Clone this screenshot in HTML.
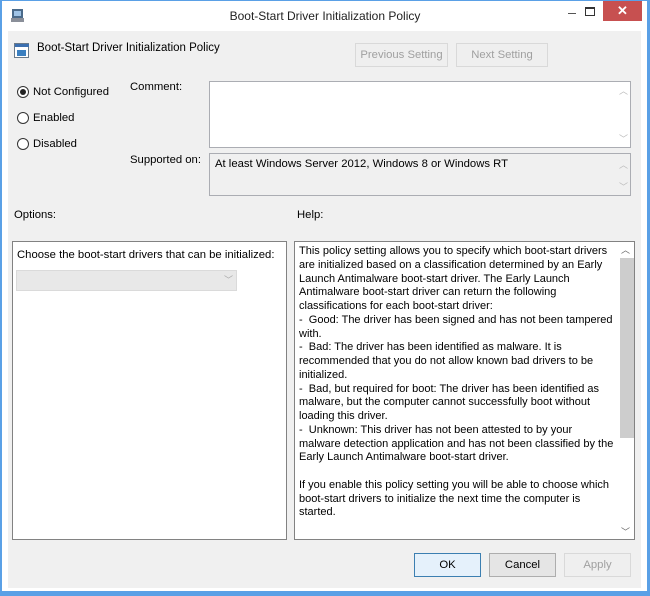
<!DOCTYPE html>
<html><head><style>
*{margin:0;padding:0;box-sizing:border-box}
body{width:650px;height:596px;overflow:hidden;background:#fff;font-family:"Liberation Sans",sans-serif;font-size:11.3px;color:#000;position:relative}
.a{position:absolute}
.frame{left:0;top:0;width:650px;height:596px;border-left:2px solid #5aa0e6;border-right:3px solid #5aa0e6;border-bottom:5px solid #5aa0e6;border-top:1px solid #5aa0e6}
.client{left:8px;top:31px;width:633px;height:557px;background:#f0f0f0}
.btn{border:1px solid #adadad;background:#e5e5e5;text-align:center;line-height:22px}
.dis{border-color:#d9d9d9;background:#efefef;color:#a0a0a0}
.box{background:#fff;border:1px solid #828282}
.radio{width:12px;height:12px;border:1px solid #333;border-radius:50%;background:#fff}
.help{line-height:13.75px;white-space:nowrap;font-size:11px}
</style></head><body>
<div class="a frame"></div>
<div class="a client"></div>
<svg class="a" style="left:10px;top:8px" width="16" height="15"><rect x="2" y="1" width="11" height="9" fill="#4a6a8a"/><rect x="4" y="3" width="7" height="5" fill="#9fc3e6"/><rect x="1" y="10" width="13" height="4" fill="#8a8f99"/></svg>
<div class="a" style="left:0;width:650px;top:9px;text-align:center;font-size:12px;color:#222">Boot-Start Driver Initialization Policy</div>
<div class="a" style="left:568px;top:13px;width:8px;height:1px;background:#555"></div>
<div class="a" style="left:585px;top:7px;width:10px;height:9px;border:1px solid #333;border-top-width:2px"></div>
<div class="a" style="left:603px;top:1px;width:39px;height:20px;background:#c75050;color:#fff;text-align:center;font-size:13px;line-height:20px;font-weight:bold">✕</div>
<svg class="a" style="left:14px;top:43px" width="16" height="16"><rect x="0.5" y="0.5" width="14" height="14" fill="#fff" stroke="#6a7a8a"/><rect x="1" y="1" width="14" height="3" fill="#3b6fb0"/><rect x="3" y="7" width="9" height="6" fill="#3a7fc0"/></svg>
<div class="a" style="left:37px;top:42px;font-size:11.5px">Boot-Start Driver Initialization Policy</div>
<div class="a btn dis" style="left:355px;top:43px;width:93px;height:24px">Previous Setting</div>
<div class="a btn dis" style="left:456px;top:43px;width:92px;height:24px">Next Setting</div>
<div class="a radio" style="left:17px;top:86px"></div><div class="a" style="left:20px;top:89px;width:6px;height:6px;border-radius:50%;background:#222"></div>
<div class="a" style="left:33px;top:86px">Not Configured</div>
<div class="a radio" style="left:17px;top:112px"></div><div class="a" style="left:33px;top:112px">Enabled</div>
<div class="a radio" style="left:17px;top:138px"></div><div class="a" style="left:33px;top:138px">Disabled</div>
<div class="a" style="left:130px;top:81px">Comment:</div>
<div class="a box" style="left:209px;top:81px;width:422px;height:67px;border-color:#abadb3"></div>
<div class="a" style="left:619px;top:84px;color:#bbb;font-size:9px">︿</div>
<div class="a" style="left:619px;top:132px;color:#bbb;font-size:9px">﹀</div>
<div class="a" style="left:130px;top:154px">Supported on:</div>
<div class="a box" style="left:209px;top:153px;width:422px;height:43px;background:#f0f0f0;border-color:#abadb3;padding:4px 5px">At least Windows Server 2012, Windows 8 or Windows RT</div>
<div class="a" style="left:619px;top:158px;color:#bbb;font-size:9px">︿</div>
<div class="a" style="left:619px;top:180px;color:#bbb;font-size:9px">﹀</div>
<div class="a" style="left:14px;top:209px">Options:</div>
<div class="a" style="left:297px;top:209px">Help:</div>
<div class="a box" style="left:12px;top:241px;width:275px;height:299px"></div>
<div class="a" style="left:17px;top:249px">Choose the boot-start drivers that can be initialized:</div>
<div class="a" style="left:16px;top:270px;width:221px;height:21px;background:#e8e8e8;border:1px solid #dadada"></div>
<div class="a" style="left:224px;top:273px;color:#aaa;font-size:9px">﹀</div>
<div class="a box" style="left:294px;top:241px;width:341px;height:299px"></div>
<div class="a" style="left:620px;top:258px;width:14px;height:180px;background:#cdcdcd"></div>
<div class="a" style="left:621px;top:243px;color:#666;font-size:9px">︿</div>
<div class="a" style="left:621px;top:525px;color:#666;font-size:9px">﹀</div>
<div class="a help" style="left:299px;top:245px">This policy setting allows you to specify which boot-start drivers<br>are initialized based on a classification determined by an Early<br>Launch Antimalware boot-start driver. The Early Launch<br>Antimalware boot-start driver can return the following<br>classifications for each boot-start driver:<br>-&nbsp; Good: The driver has been signed and has not been tampered<br>with.<br>-&nbsp; Bad: The driver has been identified as malware. It is<br>recommended that you do not allow known bad drivers to be<br>initialized.<br>-&nbsp; Bad, but required for boot: The driver has been identified as<br>malware, but the computer cannot successfully boot without<br>loading this driver.<br>-&nbsp; Unknown: This driver has not been attested to by your<br>malware detection application and has not been classified by the<br>Early Launch Antimalware boot-start driver.<br><br>If you enable this policy setting you will be able to choose which<br>boot-start drivers to initialize the next time the computer is<br>started.</div>
<div class="a btn" style="left:414px;top:553px;width:67px;height:24px;border-color:#3c7fb1;background:#e5f1fb">OK</div>
<div class="a btn" style="left:489px;top:553px;width:67px;height:24px">Cancel</div>
<div class="a btn dis" style="left:564px;top:553px;width:67px;height:24px">Apply</div>
</body></html>
